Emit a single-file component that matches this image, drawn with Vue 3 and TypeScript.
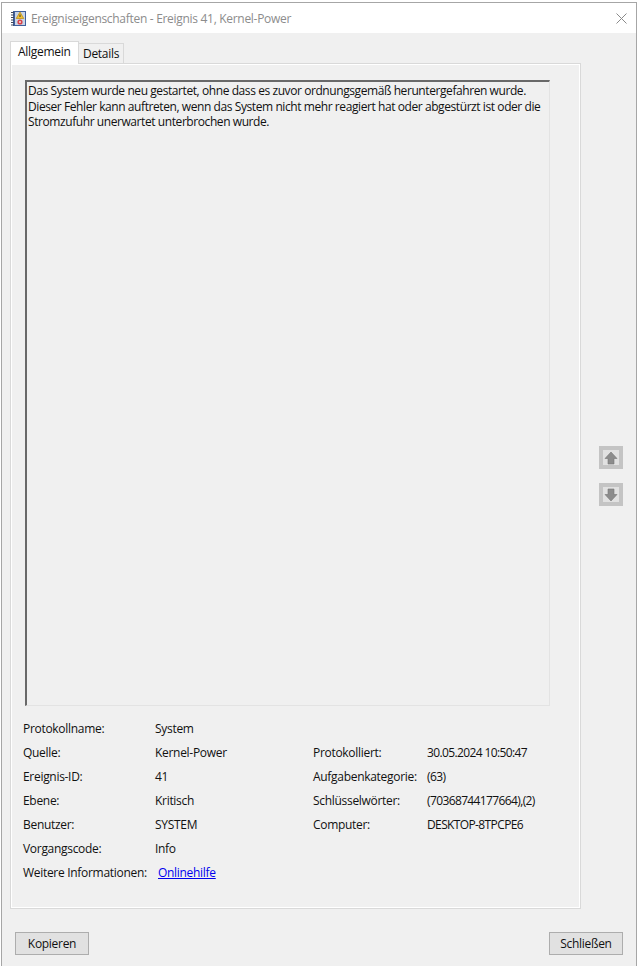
<template>
  <div class="window">
    <header class="titlebar">
      <svg class="app-icon" width="15" height="15" viewBox="0 0 15 15">
        <rect x="2" y="0" width="13" height="15" fill="#3f5f9c" />
        <rect x="4" y="1" width="10" height="13" fill="#c9d4e6" />
        <path d="M0 1.500h3M0 4h3M0 6.500h3M0 9h3M0 11.500h3M0 14h3" stroke="#40485c" stroke-width="1" />
        <path d="M9 1l3.800 6.500H5.200z" fill="#f2c230" stroke="#b98a10" stroke-width=".7" />
        <path d="M9 3.500v2.500" stroke="#333" stroke-width="1" />
        <circle cx="9" cy="11" r="2.600" fill="#d8434a" />
        <circle cx="9" cy="11" r="1" fill="#f6dada" />
      </svg>
      <span class="title">Ereigniseigenschaften - Ereignis 41, Kernel-Power</span>
      <svg class="close" width="11" height="11" viewBox="0 0 11 11">
        <path d="M.5 .5l10 10M10.500 .5l-10 10" stroke="#8a8a8a" stroke-width="1" fill="none" />
      </svg>
    </header>

    <div class="body">
      <div class="main">
        <div class="left">
          <div class="tabs">
            <div class="tab active">Allgemein</div>
            <div class="tab">Details</div>
          </div>
          <section class="panel">
            <div class="message">
              <p>Das System wurde neu gestartet, ohne dass es zuvor ordnungsgemäß heruntergefahren wurde.</p>
              <p>Dieser Fehler kann auftreten, wenn das System nicht mehr reagiert hat oder abgestürzt ist oder die</p>
              <p>Stromzufuhr unerwartet unterbrochen wurde.</p>
            </div>
            <div class="details">
              <template v-for="row in rows" :key="row.label">
                <span>{{ row.label }}</span>
                <span>{{ row.value }}</span>
                <span>{{ row.label2 }}</span>
                <span class="value2">{{ row.value2 }}</span>
              </template>
              <span>Weitere Informationen:</span>
              <a class="link" href="#">Onlinehilfe</a>
            </div>
          </section>
        </div>

        <div class="side">
          <button class="nav" type="button" aria-label="Vorheriges">
            <svg width="14" height="14" viewBox="0 0 14 14">
              <path d="M7 1l6 6.500H10V13H4V7.500H1z" fill="#8c8c8c" stroke="#777" stroke-width=".6" />
            </svg>
          </button>
          <button class="nav" type="button" aria-label="Nächstes">
            <svg width="14" height="14" viewBox="0 0 14 14">
              <path d="M7 13l6-6.500H10V1H4v5.500H1z" fill="#8c8c8c" stroke="#777" stroke-width=".6" />
            </svg>
          </button>
        </div>
      </div>

      <footer class="footer">
        <button class="btn" type="button">Kopieren</button>
        <button class="btn" type="button">Schließen</button>
      </footer>
    </div>
  </div>
</template>

<script setup lang="ts">
interface IRow {
  label: string;
  value: string;
  label2: string;
  value2: string;
}

const rows: IRow[] = [
  { label: "Protokollname:", value: "System", label2: "", value2: "" },
  { label: "Quelle:", value: "Kernel-Power", label2: "Protokolliert:", value2: "30.05.2024 10:50:47" },
  { label: "Ereignis-ID:", value: "41", label2: "Aufgabenkategorie:", value2: "(63)" },
  { label: "Ebene:", value: "Kritisch", label2: "Schlüsselwörter:", value2: "(70368744177664),(2)" },
  { label: "Benutzer:", value: "SYSTEM", label2: "Computer:", value2: "DESKTOP-8TPCPE6" },
  { label: "Vorgangscode:", value: "Info", label2: "", value2: "" },
];
</script>

<style>
html,
body {
  margin: 0;
  background: #fff;
}
</style>

<style scoped>
.window {
  box-sizing: border-box;
  width: 636px;
  height: 964px;
  margin: 2px 1px 0;
  display: flex;
  flex-direction: column;
  font-family: "Open Sans", "Noto Sans", sans-serif;
  font-size: 12px;
  letter-spacing: -0.3px;
  color: #111;
  background: #f0f0f0;
  border: 1px solid #a6a6a6;
  border-bottom: none;
}
.titlebar {
  box-sizing: border-box;
  height: 30px;
  flex: none;
  display: flex;
  align-items: center;
  padding: 0 9px 0 9px;
  background: #fff;
}
.title {
  margin-left: 5px;
  color: #8c8c8c;
  flex: 1;
}
.body {
  flex: 1;
  display: flex;
  flex-direction: column;
  padding: 8px 13px 0 8px;
}
.main {
  display: flex;
  flex: none;
}
.left {
  width: 571px;
  flex: none;
}
.tabs {
  display: flex;
  align-items: flex-end;
  height: 22px;
}
.tab {
  box-sizing: border-box;
  height: 20px;
  padding: 0 4px;
  line-height: 19px;
  background: #f0f0f0;
  border: 1px solid #d9d9d9;
  border-bottom: none;
  border-left: none;
}
.tab.active {
  height: 23px;
  margin-bottom: -1px;
  padding: 0 7px;
  line-height: 19px;
  width: 69px;
  background: #fff;
  border-left: 1px solid #d9d9d9;
  position: relative;
  z-index: 1;
}
.panel {
  box-sizing: border-box;
  height: 846px;
  padding: 16px 30px 0 14px;
  border: 1px solid #d9d9d9;
  box-shadow: inset 0 0 0 1px #fff;
  background: #f0f0f0;
}
.message {
  box-sizing: border-box;
  height: 626px;
  padding: 1px 1px;
  line-height: 15.5px;
  letter-spacing: -0.42px;
  border-style: solid;
  border-width: 2px 1px 1px 2px;
  border-color: #696969 #e3e3e3 #e3e3e3 #696969;
}
.message p {
  margin: 0;
  white-space: nowrap;
}
.details {
  display: grid;
  grid-template-columns: 132px 158px 114px 1fr;
  grid-auto-rows: 24px;
  align-items: center;
  margin: 10px 0 0 -2px;
}
.value2 {
  letter-spacing: -0.62px;
}
.link {
  color: #0000ee;
  margin-left: 3px;
}
.side {
  display: flex;
  flex-direction: column;
  gap: 14px;
  padding: 405px 0 0 18px;
}
.nav {
  box-sizing: border-box;
  width: 24px;
  height: 23px;
  padding: 0;
  display: flex;
  align-items: center;
  justify-content: center;
  background: #e1e1e1;
  border: 4px solid #c4c4c4;
}
.footer {
  display: flex;
  justify-content: space-between;
  padding: 23px 0 0 5px;
}
.btn {
  box-sizing: border-box;
  width: 74px;
  height: 23px;
  padding: 0;
  font: inherit;
  letter-spacing: inherit;
  color: #111;
  background: #e1e1e1;
  border: 1px solid #adadad;
}
</style>
